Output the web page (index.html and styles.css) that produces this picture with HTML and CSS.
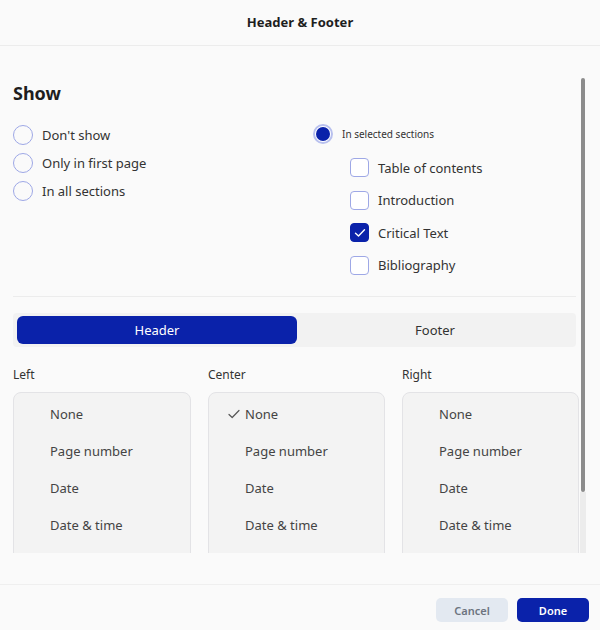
FILE: index.html
```html
<!DOCTYPE html>
<html>
<head>
<meta charset="utf-8">
<link rel="stylesheet" href="styles.css">
</head>
<body>
<div class="dialog">
  <div class="title">Header &amp; Footer</div>
  <div class="body">
    <div class="content">
      <h2 class="show-title">Show</h2>
      <div class="show-grid">
        <div class="radios">
          <div class="radio-row"><span class="radio"></span><span>Don't show</span></div>
          <div class="radio-row"><span class="radio"></span><span>Only in first page</span></div>
          <div class="radio-row"><span class="radio"></span><span>In all sections</span></div>
        </div>
        <div class="sections">
          <div class="radio-row sel"><span class="radio on"></span><span class="small">In selected sections</span></div>
          <div class="checks">
            <div class="check-row"><span class="box"></span><span>Table of contents</span></div>
            <div class="check-row"><span class="box"></span><span>Introduction</span></div>
            <div class="check-row"><span class="box on"><svg width="12" height="10" viewBox="0 0 12 10"><path d="M1.5 5.2 L4.5 8 L10.5 1.8" fill="none" stroke="#fff" stroke-width="1.4" stroke-linecap="round" stroke-linejoin="round"/></svg></span><span>Critical Text</span></div>
            <div class="check-row"><span class="box"></span><span>Bibliography</span></div>
          </div>
        </div>
      </div>
      <div class="divider"></div>
      <div class="tabs">
        <div class="tab active">Header</div>
        <div class="tab">Footer</div>
      </div>
      <div class="cols">
        <div class="col">
          <div class="col-label">Left</div>
          <div class="list">
            <div class="item">None</div>
            <div class="item">Page number</div>
            <div class="item">Date</div>
            <div class="item">Date &amp; time</div>
          </div>
        </div>
        <div class="col">
          <div class="col-label">Center</div>
          <div class="list">
            <div class="item"><svg class="tick" width="12" height="10" viewBox="0 0 12 10"><path d="M1 5.5 L4.2 8.5 L11 1.5" fill="none" stroke="#555" stroke-width="1.2" stroke-linecap="round" stroke-linejoin="round"/></svg>None</div>
            <div class="item">Page number</div>
            <div class="item">Date</div>
            <div class="item">Date &amp; time</div>
          </div>
        </div>
        <div class="col">
          <div class="col-label">Right</div>
          <div class="list">
            <div class="item">None</div>
            <div class="item">Page number</div>
            <div class="item">Date</div>
            <div class="item">Date &amp; time</div>
          </div>
        </div>
      </div>
    </div>
    <div class="scrollbar"><div class="thumb"></div></div>
  </div>
  <div class="footer">
    <button class="btn cancel">Cancel</button>
    <button class="btn done">Done</button>
  </div>
</div>
</body>
</html>
```
FILE: styles.css
```css
* { box-sizing: border-box; }
html, body { margin: 0; padding: 0; }
body {
  background: #fafafa;
  font-family: "Noto Sans", "Open Sans", sans-serif;
  color: #2b2b2b;
  width: 600px;
  height: 630px;
  overflow: hidden;
}
.dialog { display: flex; flex-direction: column; height: 630px; }
.title {
  height: 46px;
  border-bottom: 1px solid #ececec;
  display: flex; align-items: center; justify-content: center;
  font-weight: 700; font-size: 13px; color: #1e1e1e;
  padding-bottom: 2px;
}
.body {
  height: 507px;
  display: flex;
  overflow: hidden;
}
.content {
  width: 580px;
  padding: 0 0 0 13px;
  overflow: hidden;
}
.show-title {
  margin: 34px 0 0 0;
  font-size: 18px; font-weight: 700; line-height: 26px; color: #1e1e1e;
}
.show-grid { display: flex; margin-top: 19px; }
.radios { width: 300px; display: flex; flex-direction: column; gap: 8px; }
.radio-row { display: flex; align-items: center; height: 20px; font-size: 13px; color: #333; }
.radio {
  width: 20px; height: 20px; border-radius: 50%;
  border: 1.5px solid #9ea8e6; margin-right: 9px; flex: none;
  display: flex; align-items: center; justify-content: center;
}
.radio.on { border: 2px solid #b8c0ee; background: #fff; }
.radio.on::after { content: ""; width: 14px; height: 14px; border-radius: 50%; background: #0a22aa; }
.radio-row.sel { margin-top: -1px; margin-left: 0; }
.small { font-size: 10px; color: #333; }
.checks { margin-left: 37px; margin-top: 14px; display: flex; flex-direction: column; gap: 13px; }
.check-row { display: flex; align-items: center; height: 19.5px; font-size: 13px; color: #333; }
.box {
  width: 19px; height: 19px; border-radius: 4px; border: 1.5px solid #9ea8e6;
  background: #fff; margin-right: 9px; flex: none;
  display: flex; align-items: center; justify-content: center;
}
.box.on { background: #0a22aa; border-color: #0a22aa; }
.divider { height: 1px; background: #ececec; margin: 21px 4px 0 0; }
.tabs {
  margin-top: 16px;
  width: 563px; height: 34px;
  background: #f2f2f2;
  border-radius: 4px;
  display: flex; align-items: center;
  padding: 0 3px 0 4px;
}
.tab { flex: 1; height: 28px; display: flex; align-items: center; justify-content: center; font-size: 13px; color: #333; }
.tab.active { background: #0a22aa; color: #fff; border-radius: 6px; flex: 0 0 280px; }
.cols { display: flex; gap: 17px; margin-top: 19px; }
.col { width: 177px; }
.col:first-child { width: 178px; }
.col-label { font-size: 12px; color: #333; height: 17px; line-height: 17px; }
.list {
  margin-top: 9px;
  height: 200px;
  background: #f3f3f3;
  border: 1px solid #e3e3e6;
  border-radius: 8px;
  padding: 11px 0 0 36px;
}
.item { height: 37px; line-height: 20px; font-size: 13px; color: #444; position: relative; }
.tick { position: absolute; left: -17px; top: 5px; }
.scrollbar { width: 20px; display: flex; flex-direction: column; padding: 32px 0 0 1px; }
.thumb { width: 4px; height: 414px; background: #8c8c8c; border-radius: 2px; }
.scrollbar { background: linear-gradient(to right, transparent 0px, #ececec 0px, #ececec 6px, transparent 6px); background-position: 0 446px; background-repeat: no-repeat; }
.footer {
  flex: 1;
  display: flex; justify-content: flex-end; align-items: flex-end;
  gap: 9px;
  padding: 0 11px 8px 0;
  position: relative;
}
.footer::before { content: ""; position: absolute; left: 0; right: 0; top: 31px; height: 1px; background: #efefef; }
.btn {
  width: 72px; height: 24px; border: none; border-radius: 5px;
  font-family: inherit; font-size: 11px; font-weight: 600; padding: 0;
}
.cancel { background: #e3e9f1; color: #6d7480; }
.done { background: #0a22aa; color: #fff; }
```
